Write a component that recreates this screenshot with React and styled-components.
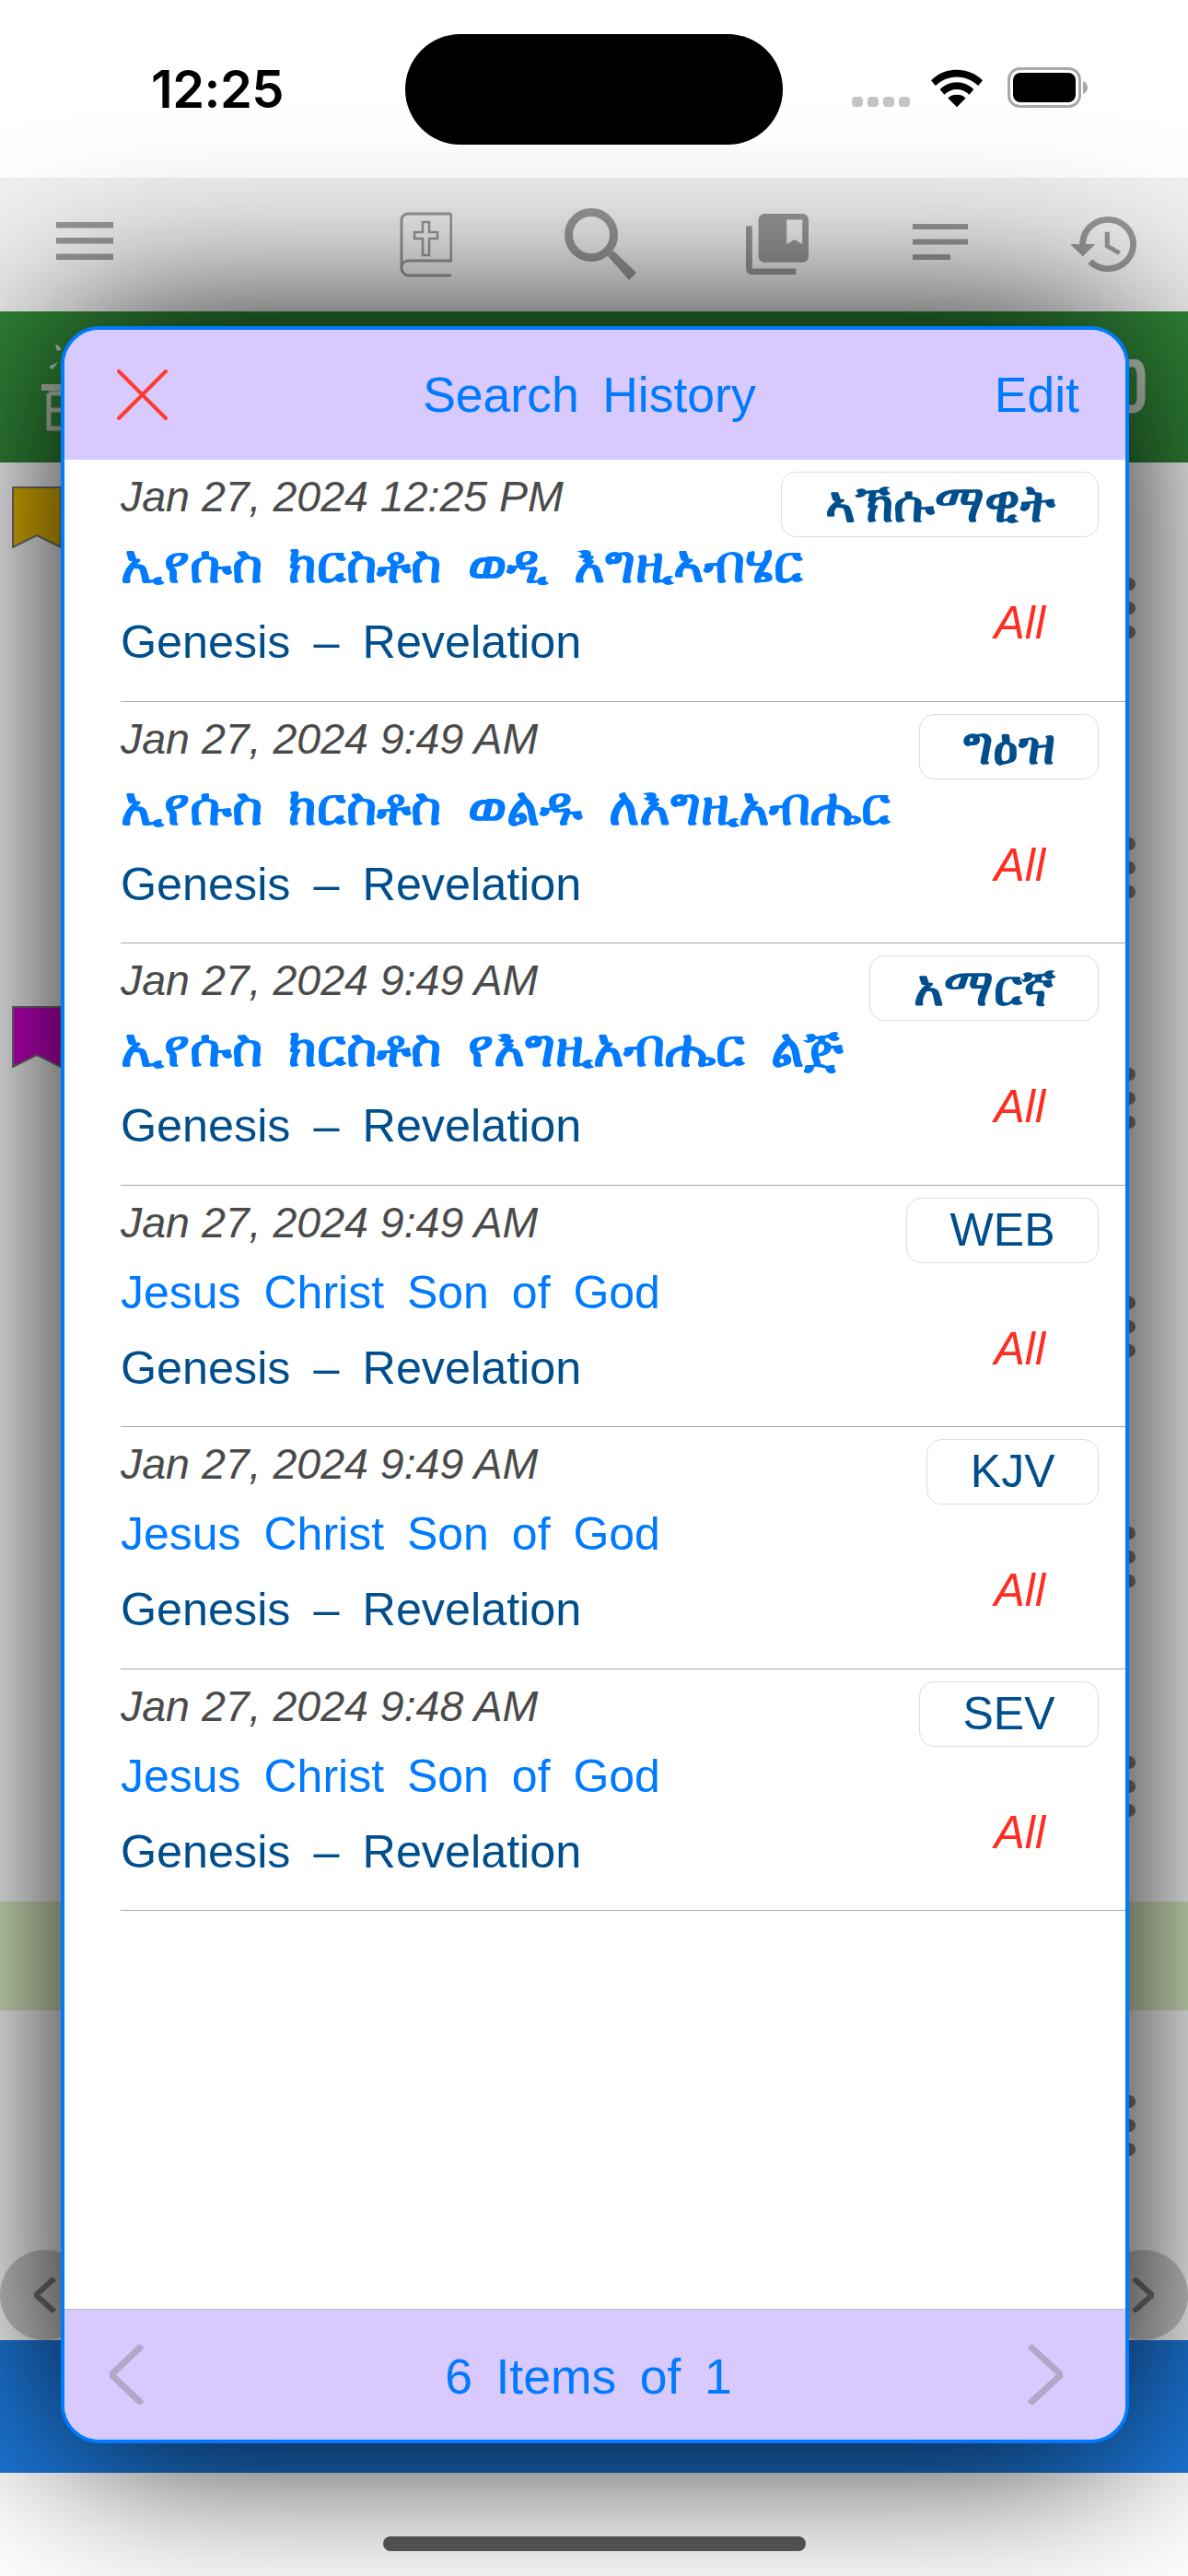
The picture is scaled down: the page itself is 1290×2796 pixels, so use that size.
import React from 'react';
import styled, { createGlobalStyle } from 'styled-components';

const BLUE = '#007aff';
const NAVY = '#004e8c';
const LILAC = '#d8caff';
const ICON_GREY = '#989898';

const GlobalStyle = createGlobalStyle`
    html, body {
        margin: 0;
        padding: 0;
        background: #fff;
    }
    * {
        box-sizing: border-box;
    }
`

const Phone = styled.div`
    position: relative;
    width: 1290px;
    height: 2796px;
    overflow: hidden;
    display: flex;
    flex-direction: column;
    font-family: "Liberation Sans", "DejaVu Sans", "Noto Sans", sans-serif;
`

const StatusBar = styled.div`
    height: 193px;
    flex: none;
    background: #fff;
    display: flex;
    align-items: flex-start;
    padding: 37px 0 0 164px;
`

const Clock = styled.div`
    font-family: Inter, "Liberation Sans", sans-serif;
    font-size: 56px;
    font-weight: 600;
    line-height: 120px;
    letter-spacing: -0.5px;
    color: #000;
    width: 276px;
`

const Island = styled.div`
    width: 410px;
    height: 120px;
    border-radius: 60px;
    background: #000;
`

const StatusIcons = styled.div`
    display: flex;
    align-items: flex-end;
    height: 80px;
    padding-left: 75px;
`

const SignalDots = styled.div`
    display: flex;
    gap: 5px;
    margin-right: 23px;
    margin-bottom: 1px;
`

const SignalDot = styled.span`
    width: 12px;
    height: 11px;
    border-radius: 4px;
    background: #c4c4c4;
`

const Battery = styled.svg`
    margin-left: 27px;
    width: 88px;
    height: 44px;
`

const Toolbar = styled.div`
    height: 145px;
    flex: none;
    background: #f0f1f0;
    display: flex;
    align-items: center;
    padding-left: 61px;
`

const ToolIcon = styled.svg`
    display: block;
    flex: none;
    width: ${props => props.$w}px;
    height: ${props => props.$h}px;
    margin-left: ${props => props.$gap || 0}px;
    margin-top: ${props => props.$top || 0}px;
    color: ${ICON_GREY};
`

const GreenBar = styled.div`
    height: 164px;
    flex: none;
    background: #308638;
    display: flex;
    justify-content: space-between;
    align-items: center;
`

const Reading = styled.div`
    flex: 1;
    background: #fff;
    display: flex;
    flex-direction: column;
`

const Verse = styled.div`
    height: ${props => props.$height}px;
    flex: none;
    display: flex;
    align-items: center;
    justify-content: flex-end;
    padding: 0 57px 0 13px;
`

const Bookmark = styled.svg`
    align-self: flex-start;
    margin-top: 26px;
    margin-right: auto;
    width: 54px;
    height: 67px;
`

const Kebab = styled.div`
    display: flex;
    flex-direction: column;
    gap: 12px;
`

const KebabDot = styled.span`
    width: 14px;
    height: 14px;
    border-radius: 50%;
    background: #8a8a8a;
`

const HighlightBand = styled.div`
    height: 118px;
    flex: none;
    margin-top: 4px;
    background: #dcedc4;
`

const PagerRow = styled.div`
    height: 98px;
    flex: none;
    margin-top: 10px;
    display: flex;
    justify-content: space-between;
`

const PagerButton = styled.div`
    width: 98px;
    height: 98px;
    border-radius: 50%;
    background: rgba(0, 0, 0, 0.2);
    display: flex;
    align-items: center;
    justify-content: center;
`

const BlueBar = styled.div`
    height: 144px;
    flex: none;
    background: #1c78dc;
`

const HomeArea = styled.div`
    height: 112px;
    flex: none;
    background: #fff;
    display: flex;
    justify-content: center;
    padding-top: 69px;
`

const HomeIndicator = styled.div`
    width: 459px;
    height: 16px;
    border-radius: 8px;
    background: #5c5c5c;
`

const Modal = styled.div`
    position: absolute;
    left: 66px;
    top: 354px;
    width: 1160px;
    height: 2298px;
    z-index: 10;
    display: flex;
    flex-direction: column;
    background: #fff;
    border: 4px solid ${BLUE};
    border-radius: 42px;
    box-shadow: 0 0 200px #000;
    overflow: hidden;
`

const ModalHeader = styled.div`
    height: 141px;
    flex: none;
    background: ${LILAC};
    display: flex;
    align-items: center;
    justify-content: space-between;
    padding: 0 50px 0 57px;
`

const BarText = styled.div`
    font-size: 53.5px;
    line-height: 60px;
    word-spacing: 0.2em;
    color: ${BLUE};
    margin-left: ${props => props.$shift || 0}px;
`

const HistoryList = styled.div`
    flex: 1;
    background: #fff;
`

const HistoryRow = styled.div`
    height: 262.5px;
    margin-left: 61px;
    border-bottom: 1px solid #a8a8a8;
    display: flex;
    justify-content: space-between;
`

const RowText = styled.div`
    flex: 1;
    min-width: 0;
    padding-top: 12px;
`

const RowDate = styled.div`
    font-size: 46.5px;
    line-height: 56px;
    font-style: italic;
    color: #4a4a4a;
`

const RowQuery = styled.div`
    margin-top: 7px;
    font-size: ${props => props.$ethiopic ? 57 : 50}px;
    line-height: ${props => props.$ethiopic ? 76 : 82}px;
    height: 82px;
    word-spacing: 0.22em;
    white-space: nowrap;
    color: ${BLUE};
    font-weight: ${props => props.$ethiopic ? 'bold' : 'normal'};
`

const RowRange = styled.div`
    font-size: 50.3px;
    line-height: 82px;
    word-spacing: 0.22em;
    color: ${NAVY};
`

const RowSide = styled.div`
    flex: none;
    display: flex;
    flex-direction: column;
    align-items: flex-end;
    padding: 13px 29px 0 0;
`

const VersionBadge = styled.div`
    height: 71px;
    padding: 0 46.5px;
    border: 1.5px solid #ddd;
    border-radius: 16px;
    font-size: ${props => props.$ethiopic ? 56 : 50}px;
    line-height: 68px;
    color: ${NAVY};
    font-weight: ${props => props.$ethiopic ? 'bold' : 'normal'};
`

const ScopeLabel = styled.div`
    margin: 63px 58px 0 0;
    font-size: 50px;
    line-height: 60px;
    font-style: italic;
    color: #ff2d20;
`

const ModalFooter = styled.div`
    height: 142px;
    flex: none;
    background: ${LILAC};
    border-top: 1.5px solid #bbb;
    display: flex;
    align-items: center;
    justify-content: space-between;
    padding: 0 68px 0 49px;
`

const FooterText = styled(BarText)`
    padding-top: 5px;
`

const historyRows = [
    { date: 'Jan 27, 2024 12:25 PM', query: 'ኢየሱስ ክርስቶስ ወዲ እግዚኣብሄር', version: 'ኣኽሱማዊት', ethiopic: true },
    { date: 'Jan 27, 2024 9:49 AM', query: 'ኢየሱስ ክርስቶስ ወልዱ ለእግዚአብሔር', version: 'ግዕዝ', ethiopic: true },
    { date: 'Jan 27, 2024 9:49 AM', query: 'ኢየሱስ ክርስቶስ የእግዚአብሔር ልጅ', version: 'አማርኛ', ethiopic: true },
    { date: 'Jan 27, 2024 9:49 AM', query: 'Jesus Christ Son of God', version: 'WEB' },
    { date: 'Jan 27, 2024 9:49 AM', query: 'Jesus Christ Son of God', version: 'KJV' },
    { date: 'Jan 27, 2024 9:48 AM', query: 'Jesus Christ Son of God', version: 'SEV' },
]

const verses = [
    { height: 316, mark: '#e8b800' },
    { height: 248 },
    { height: 252, mark: '#d000d0' },
    { height: 244 },
    { height: 256 },
    { height: 242 },
]

function KebabMenu() {
    return (
        <Kebab>
            <KebabDot />
            <KebabDot />
            <KebabDot />
        </Kebab>
    )
}

function VerseRow({ height, mark }) {
    return (
        <Verse $height={height}>
            {mark && (
                <Bookmark viewBox="0 0 54 67">
                    <polygon points="1,1 53,1 53,66 27,53 1,66" fill={mark} stroke="#777" strokeWidth="2" />
                </Bookmark>
            )}
            <KebabMenu />
        </Verse>
    )
}

function Chevron({ left, w, h, color, stroke }) {
    const points = left ? `${w - 2},1 2,${h / 2} ${w - 2},${h - 1}` : `2,1 ${w - 2},${h / 2} 2,${h - 1}`
    return (
        <svg width={w} height={h} viewBox={`0 0 ${w} ${h}`}>
            <polyline points={points} fill="none" stroke={color} strokeWidth={stroke} />
        </svg>
    )
}

export default function App() {
    return (
        <Phone>
            <GlobalStyle />
            <StatusBar>
                <Clock>12:25</Clock>
                <Island />
                <StatusIcons>
                    <SignalDots>
                        <SignalDot />
                        <SignalDot />
                        <SignalDot />
                        <SignalDot />
                    </SignalDots>
                    <svg width="56" height="42" viewBox="0 0 58 42">
                        <path d="M29 0C18 0 8 4 0 12l5 6c6-6 15-10 24-10s18 4 24 10l5-6C50 4 40 0 29 0z" fill="#000" />
                        <path d="M29 14c-7 0-14 3-19 8l5 6c4-4 9-6 14-6s10 2 14 6l5-6c-5-5-12-8-19-8z" fill="#000" />
                        <path d="M29 28c-4 0-7 1-10 4l10 10 10-10c-3-3-6-4-10-4z" fill="#000" />
                    </svg>
                    <Battery viewBox="0 0 88 44">
                        <rect x="1.5" y="1.5" width="77" height="41" rx="12" fill="none" stroke="#a8a8a8" strokeWidth="3" />
                        <rect x="6" y="6" width="68" height="32" rx="8" fill="#000" />
                        <path d="M82 15c3 1 5 4 5 7s-2 6-5 7z" fill="#a8a8a8" />
                    </Battery>
                </StatusIcons>
            </StatusBar>

            <Toolbar>
                <ToolIcon $w={62} $h={41} $top={-8} viewBox="0 0 62 41">
                    <rect y="0" width="62" height="6.5" fill="currentColor" />
                    <rect y="17" width="62" height="6.5" fill="currentColor" />
                    <rect y="34.5" width="62" height="6.5" fill="currentColor" />
                </ToolIcon>
                <ToolIcon $w={57} $h={71} $gap={311} $top={-1} viewBox="0 0 57 71">
                    <path d="M56 2H9C5 2 2 5 2 9v52c0 4 3 8 8 8h46M2 60c0-4 3-7 8-7h46V2" fill="none" stroke="currentColor" strokeWidth="3" />
                    <path d="M25 11h7v11h9v7h-9v18h-7V29h-9v-7h9z" fill="none" stroke="currentColor" strokeWidth="2.5" />
                </ToolIcon>
                <ToolIcon $w={78} $h={78} $gap={122} $top={-2} viewBox="0 0 78 78">
                    <circle cx="29" cy="29" r="24.5" fill="none" stroke="currentColor" strokeWidth="9" />
                    <path d="M47 52l6-6 25 24-8 8z" fill="currentColor" />
                </ToolIcon>
                <ToolIcon $w={68} $h={66} $gap={119} $top={-1} viewBox="2 2 20 20" preserveAspectRatio="none">
                    <path d="M4 6H2v14c0 1.100.9 2 2 2h14v-2H4V6z" fill="currentColor" />
                    <path d="M20 2H8c-1.100 0-2 .9-2 2v12c0 1.100.9 2 2 2h12c1.100 0 2-.9 2-2V4c0-1.100-.9-2-2-2zm0 10l-2.500-1.500L15 12V4h5v8z" fill="currentColor" />
                </ToolIcon>
                <ToolIcon $w={60} $h={39} $gap={113} $top={-6} viewBox="0 0 60 39">
                    <rect y="0" width="60" height="6" fill="currentColor" />
                    <rect y="16.500" width="60" height="6" fill="currentColor" />
                    <rect y="33" width="41" height="6" fill="currentColor" />
                </ToolIcon>
                <ToolIcon $w={72} $h={60} $gap={111} $top={-1} viewBox="1 3 21 18" preserveAspectRatio="none">
                    <path d="M13 3c-4.970 0-9 4.030-9 9H1l3.890 3.890.07.14L9 12H6c0-3.870 3.130-7 7-7s7 3.130 7 7-3.130 7-7 7c-1.930 0-3.680-.79-4.940-2.060l-1.420 1.420C8.270 19.990 10.510 21 13 21c4.970 0 9-4.030 9-9s-4.030-9-9-9zm-1 5v5l4.280 2.540.72-1.210-3.500-2.080V8H12z" fill="currentColor" />
                </ToolIcon>
            </Toolbar>

            <GreenBar>
                <svg width="66" height="110" viewBox="0 0 66 110">
                    <path d="M60 8l8 6-6 2zM53 33l10-5-6 8z" fill="#c4d0c4" />
                    <rect x="45" y="52" width="21" height="7" fill="#b8c4b8" />
                    <path d="M53 62h13M53 62v38h13M53 80h13" fill="none" stroke="#b8c4b8" strokeWidth="5" />
                </svg>
                <svg width="64" height="60" viewBox="0 0 64 60">
                    <path d="M0 4h4c7 0 9 6 9 14v24c0 7-4 12-9 12H0" fill="none" stroke="#c4d0c4" strokeWidth="9" />
                </svg>
            </GreenBar>

            <Reading>
                {verses.map((verse, index) => (
                    <VerseRow key={index} height={verse.height} mark={verse.mark} />
                ))}
                <HighlightBand />
                <VerseRow height={250} />
                <PagerRow>
                    <PagerButton>
                        <Chevron left w={24} h={38} color="#777" stroke={6} />
                    </PagerButton>
                    <PagerButton>
                        <Chevron w={24} h={38} color="#777" stroke={6} />
                    </PagerButton>
                </PagerRow>
            </Reading>

            <BlueBar />
            <HomeArea>
                <HomeIndicator />
            </HomeArea>

            <Modal>
                <ModalHeader>
                    <svg width="55" height="55" viewBox="0 0 55 55">
                        <path d="M2 2l51 51M53 2L2 53" stroke="#ff3b30" strokeWidth="4" strokeLinecap="round" />
                    </svg>
                    <BarText $shift={18}>Search History</BarText>
                    <BarText>Edit</BarText>
                </ModalHeader>
                <HistoryList>
                    {historyRows.map((row, index) => (
                        <HistoryRow key={index}>
                            <RowText>
                                <RowDate>{row.date}</RowDate>
                                <RowQuery $ethiopic={row.ethiopic}>{row.query}</RowQuery>
                                <RowRange>Genesis – Revelation</RowRange>
                            </RowText>
                            <RowSide>
                                <VersionBadge $ethiopic={row.ethiopic}>{row.version}</VersionBadge>
                                <ScopeLabel>All</ScopeLabel>
                            </RowSide>
                        </HistoryRow>
                    ))}
                </HistoryList>
                <ModalFooter>
                    <Chevron left w={37} h={65} color="#b0a8c6" stroke={7} />
                    <FooterText $shift={6}>6 Items of 1</FooterText>
                    <Chevron w={38} h={65} color="#b0a8c6" stroke={7} />
                </ModalFooter>
            </Modal>
        </Phone>
    )
}
